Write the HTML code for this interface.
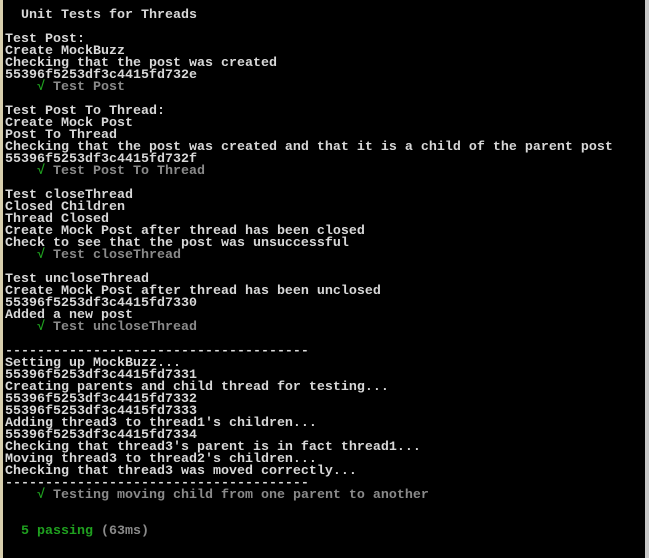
<!DOCTYPE html>
<html><head><meta charset="utf-8"><style>
html,body{margin:0;padding:0;background:#000;width:649px;height:558px;overflow:hidden}
.l{position:absolute;left:0;top:0;width:3px;height:558px;background:#d8cfae}
.r{position:absolute;left:645px;top:0;width:4px;height:558px;background:#c8c8c8}
pre{position:absolute;left:5px;top:10px;margin:0;font-family:"Liberation Mono",monospace;font-size:13.33px;line-height:12px;font-weight:bold;color:#d8d8d8;white-space:pre}
.g{color:#1fa01f}.m{color:#8a8a8a}
</style></head><body><div class="l"></div><div class="r"></div><pre>  Unit Tests for Threads

Test Post:
Create MockBuzz
Checking that the post was created
55396f5253df3c4415fd732e
    <span class="g">√</span> <span class="m">Test Post</span>

Test Post To Thread:
Create Mock Post
Post To Thread
Checking that the post was created and that it is a child of the parent post
55396f5253df3c4415fd732f
    <span class="g">√</span> <span class="m">Test Post To Thread</span>

Test closeThread
Closed Children
Thread Closed
Create Mock Post after thread has been closed
Check to see that the post was unsuccessful
    <span class="g">√</span> <span class="m">Test closeThread</span>

Test uncloseThread
Create Mock Post after thread has been unclosed
55396f5253df3c4415fd7330
Added a new post
    <span class="g">√</span> <span class="m">Test uncloseThread</span>

--------------------------------------
Setting up MockBuzz...
55396f5253df3c4415fd7331
Creating parents and child thread for testing...
55396f5253df3c4415fd7332
55396f5253df3c4415fd7333
Adding thread3 to thread1's children...
55396f5253df3c4415fd7334
Checking that thread3's parent is in fact thread1...
Moving thread3 to thread2's children...
Checking that thread3 was moved correctly...
--------------------------------------
    <span class="g">√</span> <span class="m">Testing moving child from one parent to another</span>


  <span class="g">5 passing</span> <span class="m">(63ms)</span></pre></body></html>
